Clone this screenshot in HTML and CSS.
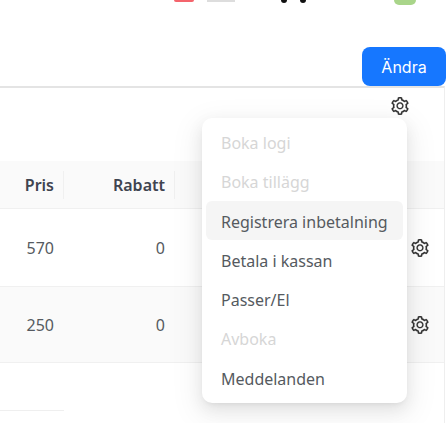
FILE: index.html
```html
<html>
	<head>
		<title> Bokningar </title>
		<link rel="stylesheet" href="styles.css">
	</head>
	<body>
		<svg class="defs" width="0" height="0">
			<symbol id="gear" viewBox="64 64 896 896">
				<path d="M924.8 625.7l-65.5-56c3.1-19 4.7-38.4 4.7-57.8s-1.6-38.8-4.7-57.8l65.5-56a32.03 32.03 0 009.3-35.2l-.9-2.6a443.74 443.74 0 00-79.7-137.9l-1.8-2.1a32.12 32.12 0 00-35.1-9.5l-81.3 28.9c-30-24.6-63.5-44-99.7-57.6l-15.7-85a32.05 32.05 0 00-25.8-25.7l-2.7-.5c-52.1-9.4-106.9-9.4-159 0l-2.7.5a32.05 32.05 0 00-25.8 25.7l-15.8 85.4a351.86 351.86 0 00-99 57.4l-81.9-29.1a32 32 0 00-35.1 9.5l-1.8 2.1a446.02 446.02 0 00-79.7 137.9l-.9 2.6c-4.5 12.5-.8 26.5 9.3 35.2l66.3 56.6c-3.1 18.8-4.6 38-4.6 57.1 0 19.2 1.5 38.4 4.6 57.1L99 625.5a32.03 32.03 0 00-9.3 35.2l.9 2.6c18.1 50.4 44.9 96.9 79.7 137.9l1.8 2.1a32.12 32.12 0 0035.1 9.5l81.9-29.1c29.8 24.5 63.1 43.9 99 57.4l15.8 85.4a32.05 32.05 0 0025.8 25.7l2.7.5a449.4 449.4 0 00159 0l2.7-.5a32.05 32.05 0 0025.8-25.7l15.7-85a350 350 0 0099.7-57.6l81.3 28.9a32 32 0 0035.1-9.5l1.8-2.1c34.8-41.1 61.6-87.5 79.7-137.9l.9-2.6c4.5-12.3.8-26.3-9.3-35zM788.3 465.9c2.5 15.1 3.8 30.6 3.8 46.1s-1.3 31-3.8 46.1l-6.6 40.1 74.7 63.9a370.03 370.03 0 01-42.6 73.6L721 702.8l-31.4 25.8c-23.9 19.6-50.5 35-79.3 45.8l-38.1 14.3-17.9 97a377.5 377.5 0 01-85 0l-17.9-97.2-37.8-14.5c-28.5-10.8-55-26.2-78.7-45.7l-31.4-25.9-93.4 33.2c-17-22.9-31.2-47.6-42.6-73.6l75.5-64.5-6.5-40c-2.4-14.9-3.7-30.3-3.7-45.5 0-15.3 1.2-30.6 3.7-45.5l6.5-40-75.5-64.5c11.3-26.1 25.6-50.7 42.6-73.6l93.4 33.2 31.4-25.9c23.7-19.5 50.2-34.9 78.7-45.7l37.9-14.3 17.9-97.2c28.1-3.2 56.8-3.2 85 0l17.9 97 38.1 14.3c28.7 10.8 55.4 26.2 79.3 45.8l31.4 25.8 92.8-32.9c17 22.9 31.2 47.6 42.6 73.6L781.8 426l6.5 39.9zM512 326c-97.2 0-176 78.8-176 176s78.8 176 176 176 176-78.8 176-176-78.8-176-176-176zm79.2 255.2A111.6 111.6 0 01512 614c-29.9 0-58-11.7-79.2-32.8A111.6 111.6 0 01400 502c0-29.9 11.7-58 32.8-79.2C454 401.6 482.1 390 512 390c29.9 0 58 11.6 79.2 32.8A111.6 111.6 0 01624 502c0 29.9-11.7 58-32.8 79.2z"/>
			</symbol>
		</svg>

		<div class="topbar">
			<span class="flag-red"></span>
			<span class="flag-grey"></span>
			<span class="dot"></span>
			<span class="dot"></span>
			<span class="avatar"></span>
		</div>

		<div class="actions">
			<button class="primary"> Ändra </button>
		</div>

		<div class="panel">
			<div class="gear-row">
				<svg class="gear"><use href="#gear"/></svg>
			</div>
			<div class="row head">
				<div class="cell pris"><b>Pris</b></div>
				<div class="cell rabatt"><b>Rabatt</b></div>
			</div>
			<div class="row first">
				<div class="cell pris">570</div>
				<div class="cell rabatt">0</div>
				<svg class="gear"><use href="#gear"/></svg>
			</div>
			<div class="row second">
				<div class="cell pris">250</div>
				<div class="cell rabatt">0</div>
				<svg class="gear"><use href="#gear"/></svg>
			</div>
			<div class="foot-line"></div>
		</div>

		<ul class="menu">
			<li class="off">Boka logi</li>
			<li class="off">Boka tillägg</li>
			<li class="hover">Registrera inbetalning</li>
			<li>Betala i kassan</li>
			<li>Passer/El</li>
			<li class="off">Avboka</li>
			<li>Meddelanden</li>
		</ul>
	</body>
</html>
```

FILE: styles.css
```css
html{
	font-family: "Noto Sans", sans-serif;
}
body{
	margin: 0;
	width: 447px;
	height: 423px;
	overflow: hidden;
	position: relative;
	background: white;
	color: #555a60;
}
.defs{
	display: block;
}
.topbar{
	height: 47px;
	display: flex;
	align-items: flex-start;
}
.flag-red{
	width: 20px;
	height: 2px;
	margin-left: 174px;
	background: #f4646c;
	border-radius: 0 0 3px 3px;
}
.flag-grey{
	width: 28px;
	height: 2px;
	margin-left: 13px;
	background: #dddddd;
}
.dot{
	width: 6px;
	height: 3px;
	margin-left: 13px;
	background: #111111;
	border-radius: 0 0 3px 3px;
}
.dot:nth-of-type(3){
	margin-left: 46px;
}
.avatar{
	width: 22px;
	height: 5px;
	margin-left: 88px;
	background: #a9d58a;
	border-radius: 0 0 11px 11px;
}
.actions{
	display: flex;
	justify-content: flex-end;
	padding-right: 1px;
}
.primary{
	width: 84px;
	height: 39px;
	color: white;
	background-color: #1677ff;
	border: none;
	border-radius: 8px;
	font-family: "Inter", sans-serif;
	font-size: 16px;
}
.panel{
	width: 444px;
	height: 336px;
	border-top: 2px solid #e4e4e4;
	border-right: 1px solid #eeeeee;
}
.gear-row{
	height: 73px;
	display: flex;
	justify-content: flex-end;
	padding: 9px 35px 0 0;
	box-sizing: border-box;
}
.gear{
	width: 18px;
	height: 18px;
	fill: #333333;
	stroke: #333333;
	stroke-width: 8;
}
.row{
	display: flex;
	align-items: center;
	border-bottom: 1px solid #f0f0f0;
	font-size: 16px;
}
.head{
	height: 47px;
	background: #fafafa;
	color: #3f4450;
}
.head b{
	font-weight: 600;
}
.first{
	height: 77px;
}
.second{
	height: 75px;
	background: #fafafa;
}
.row > .gear{
	margin-left: auto;
	margin-right: 15px;
}
.cell{
	text-align: right;
}
.pris{
	width: 54px;
}
.rabatt{
	width: 111px;
}
.head .pris,
.head .rabatt{
	height: 28px;
	line-height: 28px;
	padding-right: 9px;
	border-right: 1px solid #f0f0f0;
}
.head .rabatt{
	width: 101px;
}
.foot-line{
	width: 64px;
	height: 1px;
	margin-top: 47px;
	background: #efefef;
}
.menu{
	position: absolute;
	left: 202px;
	top: 118px;
	width: 205px;
	height: 285px;
	box-sizing: border-box;
	margin: 0;
	padding: 4px;
	list-style: none;
	background: white;
	border-radius: 10px;
	box-shadow: 0 6px 16px rgba(0,0,0,0.08), 0 3px 6px -4px rgba(0,0,0,0.12), 0 9px 28px 8px rgba(0,0,0,0.05);
	font-size: 16px;
	color: #555a60;
}
.menu li{
	height: 39.3px;
	line-height: 43px;
	padding-left: 15px;
	border-radius: 6px;
	white-space: nowrap;
}
.menu .off{
	color: #d6d6d6;
}
.menu .hover{
	height: 39.3px;
	background: #f5f5f5;
}
```
